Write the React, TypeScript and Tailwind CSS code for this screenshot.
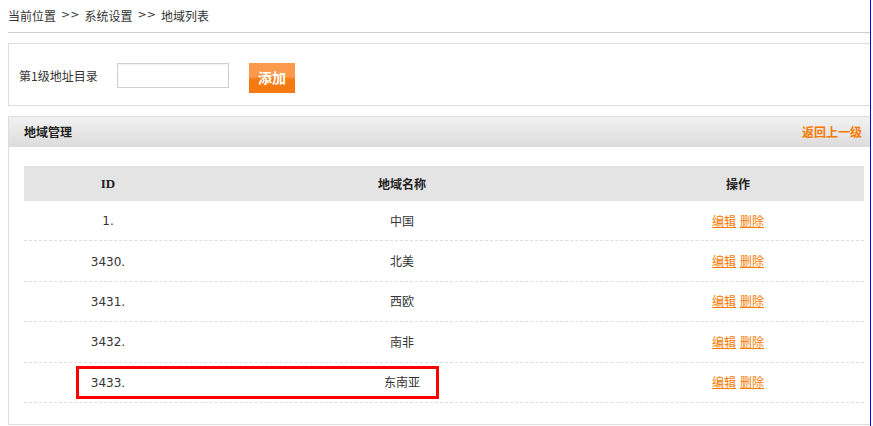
import React from 'react';

type Region = { id: string; name: string };

const regions: Region[] = [
    { id: '1.', name: '中国' },
    { id: '3430.', name: '北美' },
    { id: '3431.', name: '西欧' },
    { id: '3432.', name: '南非' },
    { id: '3433.', name: '东南亚' },
];

const font = "font-['DejaVu_Sans','Noto_Sans_CJK_SC',sans-serif]";

export default function App() {
    return (
        <div className={`relative w-[873px] h-[426px] overflow-hidden bg-white text-[#333] ${font}`}>
            <div className="flex h-full">
                <div className="w-[870px] h-full overflow-hidden pl-2">
                    {/* Breadcrumb */}
                    <div className="w-[880px] h-[33px] border-b border-[#cccccc] flex items-center text-[12px] font-['Noto_Sans_CJK_SC',sans-serif] pb-[1px]">
                        <span>当前位置</span>
                        <span className="mx-[5px] font-['DejaVu_Sans',sans-serif] text-[11px]">&gt;&gt;</span>
                        <span>系统设置</span>
                        <span className="mx-[5px] font-['DejaVu_Sans',sans-serif] text-[11px]">&gt;&gt;</span>
                        <span>地域列表</span>
                    </div>

                    {/* Add form */}
                    <div className="mt-[10px] w-[880px] h-[63px] border border-[#dddddd] flex items-center pl-[10px] pt-[2px]">
                        <span className="w-[78px] text-[12px] font-['Noto_Sans_CJK_SC',sans-serif] whitespace-nowrap">第1级地址目录</span>
                        <input
                            className="ml-[20px] w-[112px] h-[25px] border border-[#cfcfcf] shadow-[inset_0_1px_2px_rgba(0,0,0,0.06)] outline-none px-1 text-[12px]"
                            defaultValue=""
                        />
                        <button className="ml-[20px] w-[46px] h-[30px] mt-[4px] bg-[linear-gradient(to_bottom,#f99a4c_0%,#f99a4c_45%,#f57a12_55%,#f57a12_100%)] text-white text-[14px] font-bold font-['Noto_Sans_CJK_SC',sans-serif]">
                            添加
                        </button>
                    </div>

                    {/* Region list panel */}
                    <div className="mt-[10px] w-[874px] border border-[#dddddd] pb-[21px]">
                        <div className="h-[30px] flex items-center justify-between pl-[15px] pr-[19px] bg-[linear-gradient(to_bottom,#f2f2f2,#dcdcdc)]">
                            <span className="text-[12px] font-bold font-['Noto_Sans_CJK_SC',sans-serif] text-[#222]">地域管理</span>
                            <a className="text-[12px] font-bold text-[#f77a00] font-['Noto_Sans_CJK_SC',sans-serif] cursor-pointer">返回上一级</a>
                        </div>

                        <div className="mx-[15px] mt-[19px] w-[840px]">
                            <div className="grid grid-cols-[168px_420px_252px] h-[35px] items-center bg-[#e4e4e4] text-[12px] font-bold text-[#222]">
                                <div className="text-center font-['Liberation_Serif',serif] text-[13px]">ID</div>
                                <div className="text-center font-['Noto_Sans_CJK_SC',sans-serif]">地域名称</div>
                                <div className="text-center font-['Noto_Sans_CJK_SC',sans-serif]">操作</div>
                            </div>
                            {regions.map((r) => (
                                <div
                                    key={r.id}
                                    className="grid grid-cols-[168px_420px_252px] h-[40.4px] items-center border-b border-dashed border-[#dedede] text-[12px] leading-[18px]"
                                >
                                    <div className="text-center font-['DejaVu_Sans',sans-serif] pt-[1px]">{r.id}</div>
                                    <div className="text-center font-['Noto_Sans_CJK_SC',sans-serif]">{r.name}</div>
                                    <div className="text-center font-['Noto_Sans_CJK_SC',sans-serif] text-[#f77a00]">
                                        <a className="underline cursor-pointer">编辑</a>
                                        <a className="underline cursor-pointer ml-[4px]">删除</a>
                                    </div>
                                </div>
                            ))}
                        </div>
                    </div>
                </div>
                <div className="w-px h-full bg-[#0000ff]" />
            </div>

            {/* Highlight marker around the last row */}
            <div className="absolute left-[76px] top-[366px] w-[363px] h-[33px] border-[3px] border-[#ff0000]" />
        </div>
    );
}
